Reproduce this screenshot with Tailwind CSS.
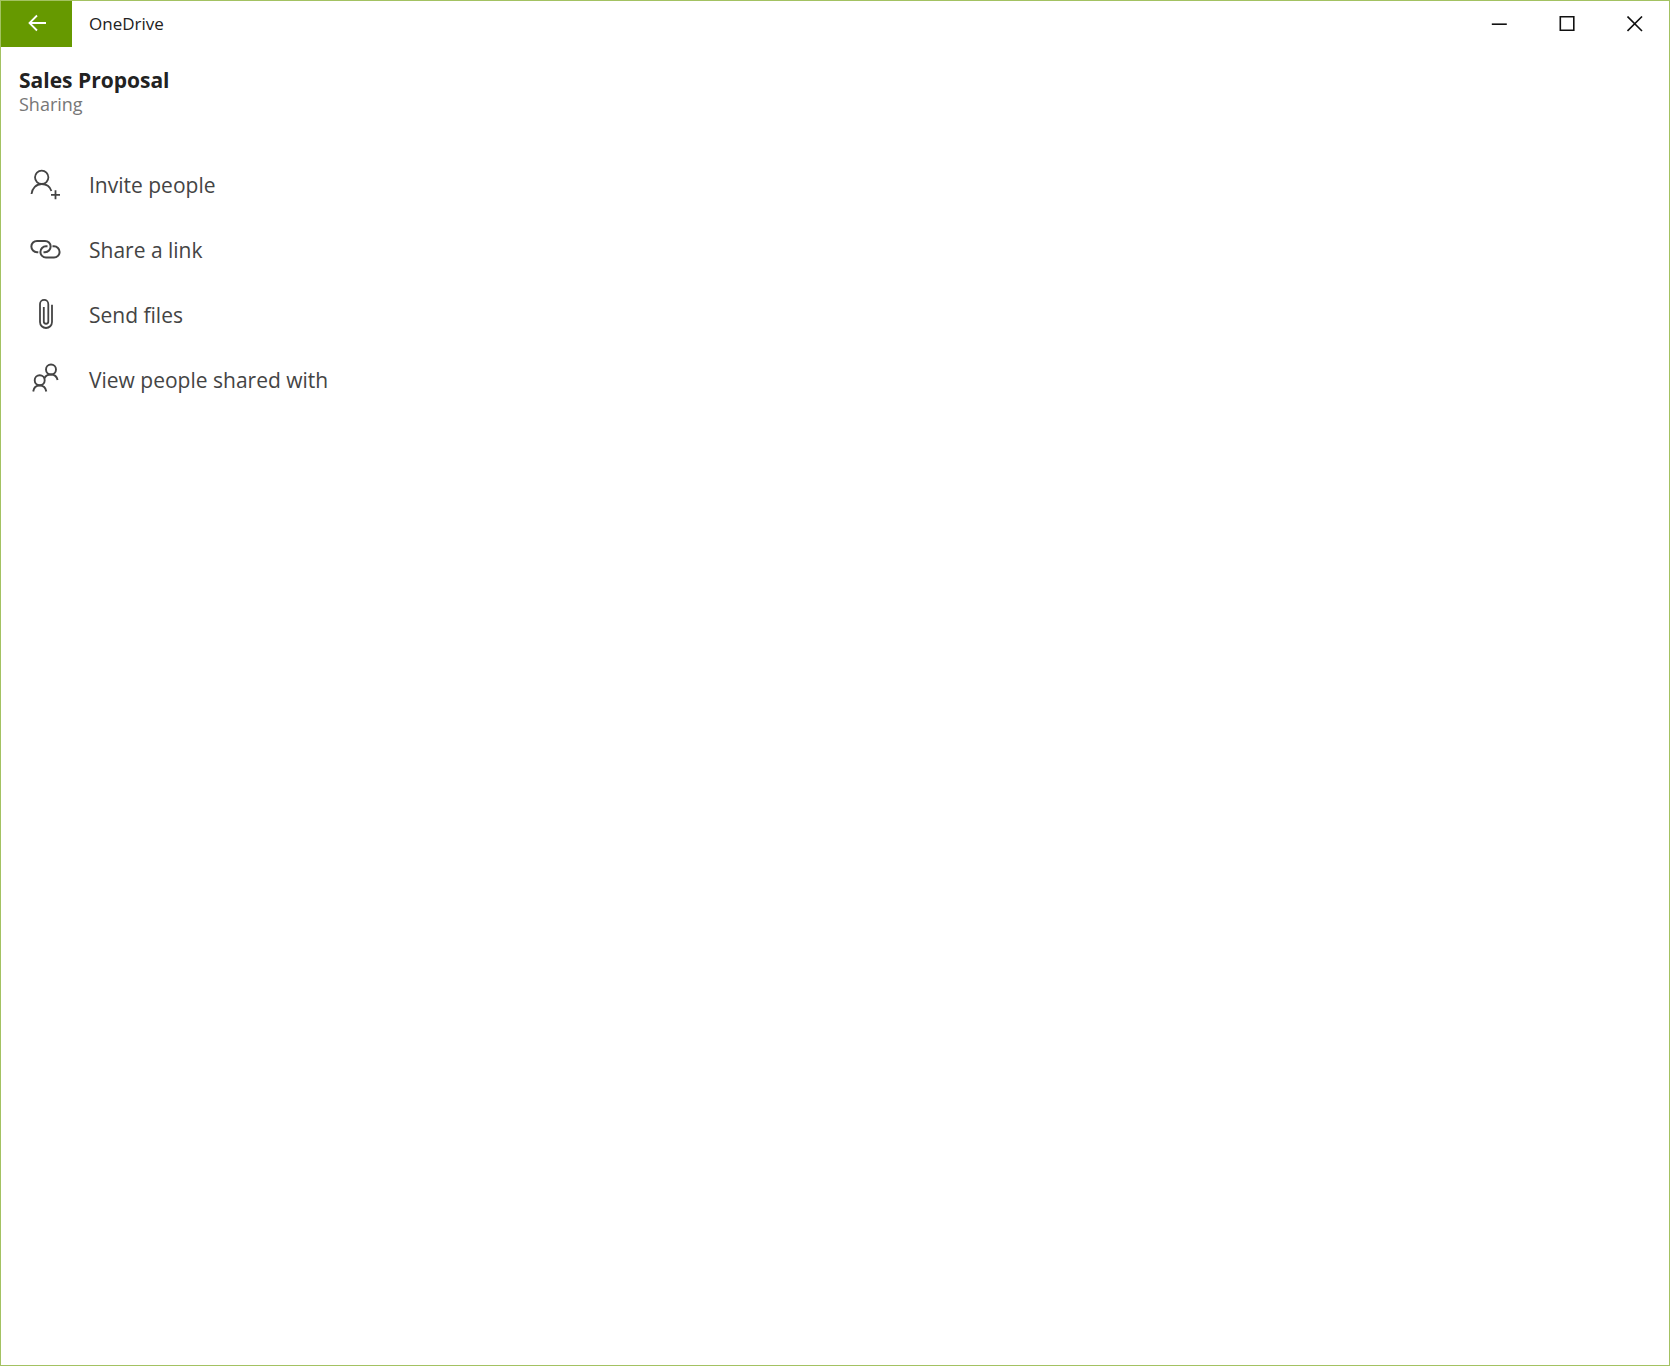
<!DOCTYPE html>
<html lang="en">
<head>
<meta charset="utf-8">
<title>OneDrive</title>
<script src="https://cdn.jsdelivr.net/npm/@tailwindcss/browser@4"></script>
</head>
<body class="bg-white font-['Open_Sans','Noto_Sans',sans-serif]">
<div class="flex min-h-screen flex-col border border-[#a3c262]">
  <header class="flex h-[46px] items-center">
    <button aria-label="Back" class="flex h-full w-[71px] items-center justify-center bg-[#669900] text-white">
      <svg class="h-5 w-5" viewBox="0 0 20 20" fill="none" stroke="currentColor" stroke-width="1.8"><path d="M19 9H2.500M10 1.500L2.500 9l7.500 7.500"/></svg>
    </button>
    <h1 class="ml-[17px] flex-1 text-[17px] leading-6 text-[#222]">OneDrive</h1>
    <button aria-label="Minimize" class="flex h-full w-[68px] items-center justify-center text-[#111]">
      <svg class="h-4 w-4" viewBox="0 0 16 16" fill="none" stroke="currentColor" stroke-width="1.6"><path d="M.8 8.200h15"/></svg>
    </button>
    <button aria-label="Maximize" class="flex h-full w-[68px] items-center justify-center text-[#111]">
      <svg class="h-4 w-4" viewBox="0 0 16 16" fill="none" stroke="currentColor" stroke-width="1.6"><path d="M1.300.8h13.500v13.500H1.300z"/></svg>
    </button>
    <button aria-label="Close" class="flex h-full w-[68px] items-center justify-center text-[#111]">
      <svg class="h-4 w-4" viewBox="0 0 16 16" fill="none" stroke="currentColor" stroke-width="1.6"><path d="M.5.5L15 15M15 .5L.5 15"/></svg>
    </button>
  </header>
  <main>
    <div class="h-[106px] px-[18px] pt-[19px]">
      <h2 class="text-[21px] leading-7 font-bold text-[#222]">Sales Proposal</h2>
      <p class="text-[18px] leading-5 text-[#777]">Sharing</p>
    </div>
    <nav class="flex flex-col text-[21px] text-[#444]">
      <button class="flex h-[65px] items-center gap-[19px] pl-[19px] text-left">
        <svg class="h-[51px] w-[50px]" viewBox="0 0 50 51" fill="none" stroke="currentColor" stroke-width="1.8"><circle cx="21.700" cy="17.300" r="6.700"/><path d="M11.500 34c.6-5.800 4.700-10 10.200-10 4.600 0 8.300 2.700 9.700 7M35.500 30.300v9M31 34.800h9"/></svg>
        Invite people
      </button>
      <button class="flex h-[65px] items-center gap-[19px] pl-[19px] text-left">
        <svg class="h-[51px] w-[50px]" viewBox="0 0 50 51" fill="none" stroke="currentColor" stroke-width="2"><path d="M18.300 27.200H17a5.600 5.600 0 0 1 0-11.300h8a5.600 5.600 0 0 1 0 11.300h-1.500M32.500 21.300h1.500a5.600 5.600 0 0 1 0 11.200h-8a5.600 5.600 0 0 1 0-11.200h1.500"/></svg>
        Share a link
      </button>
      <button class="flex h-[65px] items-center gap-[19px] pl-[19px] text-left">
        <svg class="h-[51px] w-[50px]" viewBox="0 0 50 51" fill="none" stroke="currentColor" stroke-width="1.800"><path d="M32 14.700v17.300a6 6 0 0 1-12 0V14a4 4 0 0 1 8.300 0v17.500a2.200 2.200 0 0 1-4.500 0V17"/></svg>
        Send files
      </button>
      <button class="flex h-[65px] items-center gap-[19px] pl-[19px] text-left">
        <svg class="h-[51px] w-[50px]" viewBox="0 0 50 51" fill="none" stroke="currentColor" stroke-width="1.900"><circle cx="19.700" cy="25.200" r="5"/><circle cx="31" cy="14.500" r="5"/><path d="M13.200 36.500c.5-3.700 3-6 6.500-6s6 2.300 6.600 6M24.300 23.500c1-2.500 3.400-4 6.700-4 3.500 0 5.800 2 6.600 5.500"/></svg>
        View people shared with
      </button>
    </nav>
  </main>
</div>
</body>
</html>
